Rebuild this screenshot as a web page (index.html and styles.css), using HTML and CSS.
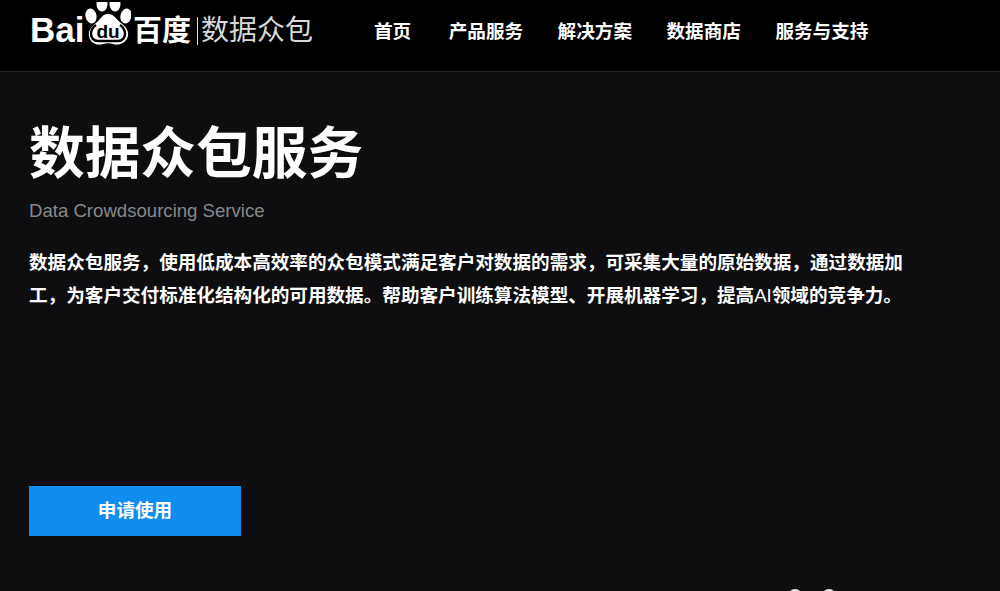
FILE: index.html
```html
<!DOCTYPE html>
<html lang="zh-CN">
<head>
<meta charset="utf-8">
<title>数据众包服务</title>
<link rel="stylesheet" href="styles.css">
</head>
<body>
<header class="topbar">
  <div class="logo">
    <span class="logo-latin">Bai</span>
    <svg class="paw" viewBox="0 0 48 48" width="48" height="48" aria-hidden="true">
      <ellipse cx="8" cy="14" rx="5.500" ry="7.500" fill="#fff" transform="rotate(-15 8 14)"/>
      <ellipse cx="19" cy="2" rx="5.500" ry="7.500" fill="#fff"/>
      <ellipse cx="32" cy="2" rx="5.500" ry="7.500" fill="#fff"/>
      <ellipse cx="43" cy="14" rx="5.500" ry="7.500" fill="#fff" transform="rotate(15 43 14)"/>
      <path d="M25 12c6 0 8 5 13 9 5 4 8 8 7 13-2 7-9 10-15 8-3-1-6-1-10 0-6 2-13-1-14-8-1-5 2-9 7-13 5-4 6-9 12-9z" fill="#fff"/>
      <path class="paw-ring" d="M13 23c-3 2-5 5-5 9 0 4 3 7 7 7h20c4 0 7-3 7-7 0-4-2-7-5-9"/>
      <text class="paw-text" x="25" y="36" text-anchor="middle">du</text>
    </svg>
    <span class="logo-cn">百度</span>
    <span class="logo-sep"></span>
    <span class="logo-product">数据众包</span>
  </div>
  <nav class="nav">
    <a href="#">首页</a>
    <a href="#">产品服务</a>
    <a href="#">解决方案</a>
    <a href="#">数据商店</a>
    <a href="#">服务与支持</a>
  </nav>
</header>
<main class="hero">
  <h1 class="title">数据众包服务</h1>
  <p class="subtitle">Data Crowdsourcing Service</p>
  <p class="desc"><span class="line">数据众包服务，使用低成本高效率的众包模式满足客户对数据的需求，可采集大量的原始数据，通过数据加</span><span class="line">工，为客户交付标准化结构化的可用数据。帮助客户训练算法模型、开展机器学习，提高<span class="latin">AI</span>领域的竞争力。</span></p>
  <a class="apply" href="#">申请使用</a>
  <div class="dots"><span></span><span></span></div>
</main>
</body>
</html>
```
FILE: styles.css
```css
html, body {
  margin: 0;
  height: 591px;
  overflow: hidden;
  background: #0e0e10;
  font-family: "Liberation Sans", "Noto Sans CJK SC", sans-serif;
  color: #fff;
}
.topbar {
  height: 72px;
  box-sizing: border-box;
  background: #000;
  border-bottom: 1px solid #262626;
  display: flex;
  align-items: flex-start;
  padding-left: 30px;
}
.logo {
  display: flex;
  align-items: center;
  width: 344px;
  height: 44px;
  margin-top: 8px;
}
.logo-latin {
  font-size: 35px;
  font-weight: 700;
  line-height: 44px;
  width: 54px;
}
.paw {
  flex: none;
  margin-top: -8px;
  margin-left: -1px;
}
.paw-ring {
  fill: none;
  stroke: #000;
  stroke-width: 2.500;
}
.paw-text {
  font-size: 19px;
  font-weight: 700;
  fill: #000;
}
.logo-cn {
  font-size: 29px;
  font-weight: 700;
  line-height: 44px;
  margin-left: 2px;
  margin-top: 2px;
}
.logo-sep {
  width: 1px;
  height: 28px;
  background: #ddd;
  margin-left: 6px;
  margin-right: 3px;
  margin-top: 2px;
}
.logo-product {
  font-size: 28px;
  font-weight: 400;
  line-height: 44px;
  margin-top: 2px;
  color: #d8d8d8;
}
.nav {
  display: flex;
  gap: 34.500px;
  margin-top: 20px;
}
.nav a {
  color: #fff;
  text-decoration: none;
  font-size: 18.600px;
  font-weight: 700;
  line-height: 24px;
}
.nav a:first-child {
  margin-right: 3px;
}
.hero {
  position: relative;
  height: 519px;
  box-sizing: border-box;
  padding: 49px 0 0 29px;
}
.title {
  margin: 0;
  font-size: 55.700px;
  line-height: 66px;
  font-weight: 700;
}
.subtitle {
  margin: 12px 0 0;
  font-size: 18.600px;
  line-height: 24px;
  color: #87878a;
}
.desc {
  margin: 23px 0 0;
  width: 890px;
  font-size: 18.600px;
  line-height: 33px;
  font-weight: 700;
}
.line {
  display: block;
}
.latin {
  font-weight: 400;
}
.apply {
  display: flex;
  align-items: center;
  justify-content: center;
  box-sizing: border-box;
  width: 212px;
  height: 50px;
  padding-bottom: 5px;
  margin-top: 174px;
  background: #0f8ef0;
  color: #fff;
  text-decoration: none;
  font-size: 18.600px;
  font-weight: 700;
}
.dots {
  position: absolute;
  left: 788px;
  top: 517px;
  display: flex;
  gap: 20px;
}
.dots span {
  width: 14px;
  height: 14px;
  border-radius: 50%;
  background: #e8e8e8;
}
```
